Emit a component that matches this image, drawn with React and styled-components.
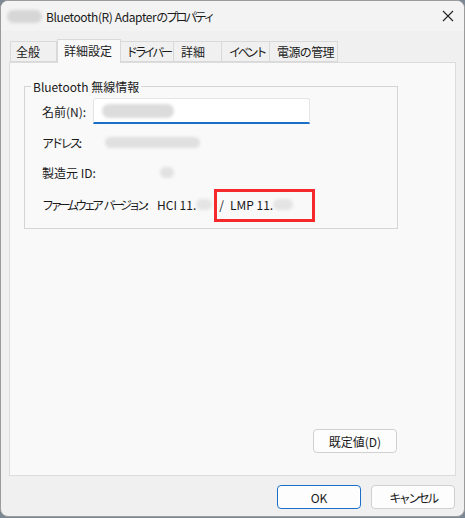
import React from 'react';
import styled, { createGlobalStyle } from 'styled-components';

const GlobalStyle = createGlobalStyle`
  html, body {
    margin: 0;
    padding: 0;
    background: #7c8794;
  }
  body {
    font-family: "Noto Sans CJK JP", "Noto Sans", sans-serif;
    font-size: 12px;
    color: #1a1a1a;
  }
`;

const Window = styled.div`
  box-sizing: border-box;
  width: 465px;
  height: 517px;
  background: #f0f0f0;
  border: 1px solid #9b9b9b;
  border-radius: 8px;
  display: flex;
  flex-direction: column;
  overflow: hidden;
`;

const TitleBar = styled.div`
  height: 30px;
  display: flex;
  align-items: center;
  padding: 0 0 0 6px;
  flex: none;
  background: #f3f3f3;
`;

const Jp = styled.span`
  letter-spacing: ${p => p.$ls || 0}px;
  word-spacing: ${p => p.$ws || 0}px;
  white-space: nowrap;
`;

const Blur = styled.span`
  display: inline-block;
  width: ${p => p.$w}px;
  height: ${p => p.$h || 12}px;
  background: ${p => p.$c || '#d6d6d6'};
  border-radius: 7px;
  filter: blur(1.5px);
  flex: none;
  vertical-align: middle;
`;

const Title = styled.span`
  margin-left: 4px;
  font-size: 12px;
  letter-spacing: -0.4px;
  flex: 1;
  white-space: nowrap;
`;

const CloseButton = styled.div`
  width: 32px;
  height: 30px;
  display: flex;
  align-items: center;
  justify-content: center;
`;

const Body = styled.div`
  flex: 1;
  display: flex;
  flex-direction: column;
  padding: 8px 8px 0 8px;
`;

const TabRow = styled.div`
  display: flex;
  align-items: flex-end;
  height: 23px;
  padding-left: 1px;
  position: relative;
  z-index: 1;
`;

const Tab = styled.div`
  box-sizing: border-box;
  width: ${p => p.$w}px;
  height: ${p => (p.$active ? 24 : 21)}px;
  margin: ${p => (p.$active ? '0 -2px -1px 0' : '0')};
  background: ${p => (p.$active ? '#f9f9f9' : '#f0f0f0')};
  border: 1px solid #d9d9d9;
  border-bottom: ${p => (p.$active ? 'none' : '1px solid #d9d9d9')};
  border-left: ${p => (p.$first || p.$active ? '1px solid #d9d9d9' : 'none')};
  padding: ${p => (p.$active ? '2px 0 0 6px' : p.$first ? '1px 0 0 5px' : '1px 0 0 7px')};
  font-size: 12px;
  line-height: 18px;
  white-space: nowrap;
  overflow: hidden;
  position: relative;
  z-index: ${p => (p.$active ? 2 : 1)};
`;

const Panel = styled.div`
  box-sizing: border-box;
  width: 447px;
  height: 414px;
  background: #f9f9f9;
  border: 1px solid #dcdcdc;
  padding: 15px 0 0 14px;
  display: flex;
  flex-direction: column;
`;

const Group = styled.fieldset`
  box-sizing: border-box;
  width: 374px;
  height: 151px;
  margin: 0;
  border: 1px solid #d5d5d5;
  padding: 0;
  flex: none;
`;

const Legend = styled.legend`
  padding: 0 2px;
  margin-left: 6px;
  font-size: 12px;
  line-height: 17px;
  color: #1a1a1a;
`;

const Rows = styled.div`
  display: flex;
  flex-direction: column;
  padding-left: 17px;
`;

const Row = styled.div`
  display: flex;
  align-items: center;
  height: ${p => p.$h}px;
`;

const Label = styled.span`
  width: ${p => p.$w}px;
  flex: none;
  white-space: nowrap;
`;

const Input = styled.div`
  box-sizing: border-box;
  width: 217px;
  height: 26px;
  background: #fff;
  border: 1px solid #e5e5e5;
  border-bottom: 2px solid #1a6fc9;
  border-radius: 3px 3px 0 0;
  display: flex;
  align-items: center;
  padding-left: 8px;
`;

const Version = styled.span`
  display: flex;
  align-items: center;
  white-space: nowrap;
`;

const Slash = styled.span`
  margin: 0 6px 0 7px;
`;

const Highlight = styled.span`
  display: flex;
  align-items: center;
  position: relative;
  &::after {
    content: '';
    position: absolute;
    left: -16px;
    top: -7px;
    width: 95px;
    height: 27px;
    border: 3px solid #f5282c;
  }
`;

const Spacer = styled.div`
  flex: 1;
`;

const Footer = styled.div`
  width: 373px;
  display: flex;
  justify-content: flex-end;
  padding-bottom: 22px;
`;

const Button = styled.button`
  box-sizing: border-box;
  width: 84px;
  height: 24px;
  background: #fdfdfd;
  border: 1px solid ${p => (p.$primary ? '#1a6fc9' : '#d0d0d0')};
  box-shadow: ${p => (p.$primary ? 'inset 0 0 0 1px #ffffff' : 'none')};
  border-radius: 4px;
  font-family: inherit;
  font-size: 12px;
  color: #1a1a1a;
  padding: 0;
`;

const ButtonBar = styled.div`
  display: flex;
  justify-content: flex-end;
  gap: 10px;
  padding: 9px 1px 0 0;
`;

const tabs = [
  { label: '全般', w: 47 },
  { label: '詳細設定', w: 64, active: true },
  { label: 'ドライバー', w: 55, ls: -3.2 },
  { label: '詳細', w: 48 },
  { label: 'イベント', w: 48, ls: -3.2 },
  { label: '電源の管理', w: 68, ls: -0.6 },
];

const App = () => (
  <>
    <GlobalStyle />
    <Window>
      <TitleBar>
        <Blur $w={35} $h={13} />
        <Title>
          Bluetooth(R) Adapter<Jp $ls={-2.4}>のプロパティ</Jp>
        </Title>
        <CloseButton>
          <svg width="12" height="12" viewBox="0 0 12 12">
            <path d="M1 1L11 11M11 1L1 11" stroke="#222" strokeWidth="1.1" fill="none" />
          </svg>
        </CloseButton>
      </TitleBar>
      <Body>
        <TabRow>
          {tabs.map((t, i) => (
            <Tab key={t.label} $w={t.w} $active={t.active} $first={i === 0}>
              <Jp $ls={t.ls}>{t.label}</Jp>
            </Tab>
          ))}
        </TabRow>
        <Panel>
          <Group>
            <Legend>Bluetooth 無線情報</Legend>
            <Rows>
              <Row $h={32}>
                <Label $w={51}>名前(N):</Label>
                <Input>
                  <Blur $w={72} $h={14} $c="#dcdcdc" />
                </Input>
              </Row>
              <Row $h={30}>
                <Label $w={63}>
                  <Jp $ls={-2.8}>アドレス:</Jp>
                </Label>
                <Blur $w={95} $h={11} $c="#e0e0e0" />
              </Row>
              <Row $h={30}>
                <Label $w={118}>製造元 ID:</Label>
                <Blur $w={14} $h={11} $c="#e2e2e2" />
              </Row>
              <Row $h={34}>
                <Label $w={115}>
                  <Jp $ls={-3.6} $ws={4}>ファームウェア バージョン:</Jp>
                </Label>
                <Version>
                  HCI 11.
                  <Blur $w={16} $h={11} $c="#e4e4e4" />
                  <Slash>/</Slash>
                  <Highlight>
                    LMP 11.
                    <Blur $w={20} $h={11} $c="#e4e4e4" />
                  </Highlight>
                </Version>
              </Row>
            </Rows>
          </Group>
          <Spacer />
          <Footer>
            <Button>既定値(D)</Button>
          </Footer>
        </Panel>
        <ButtonBar>
          <Button $primary>OK</Button>
          <Button>
            <Jp $ls={-2.5}>キャンセル</Jp>
          </Button>
        </ButtonBar>
      </Body>
    </Window>
  </>
);

export default App;
